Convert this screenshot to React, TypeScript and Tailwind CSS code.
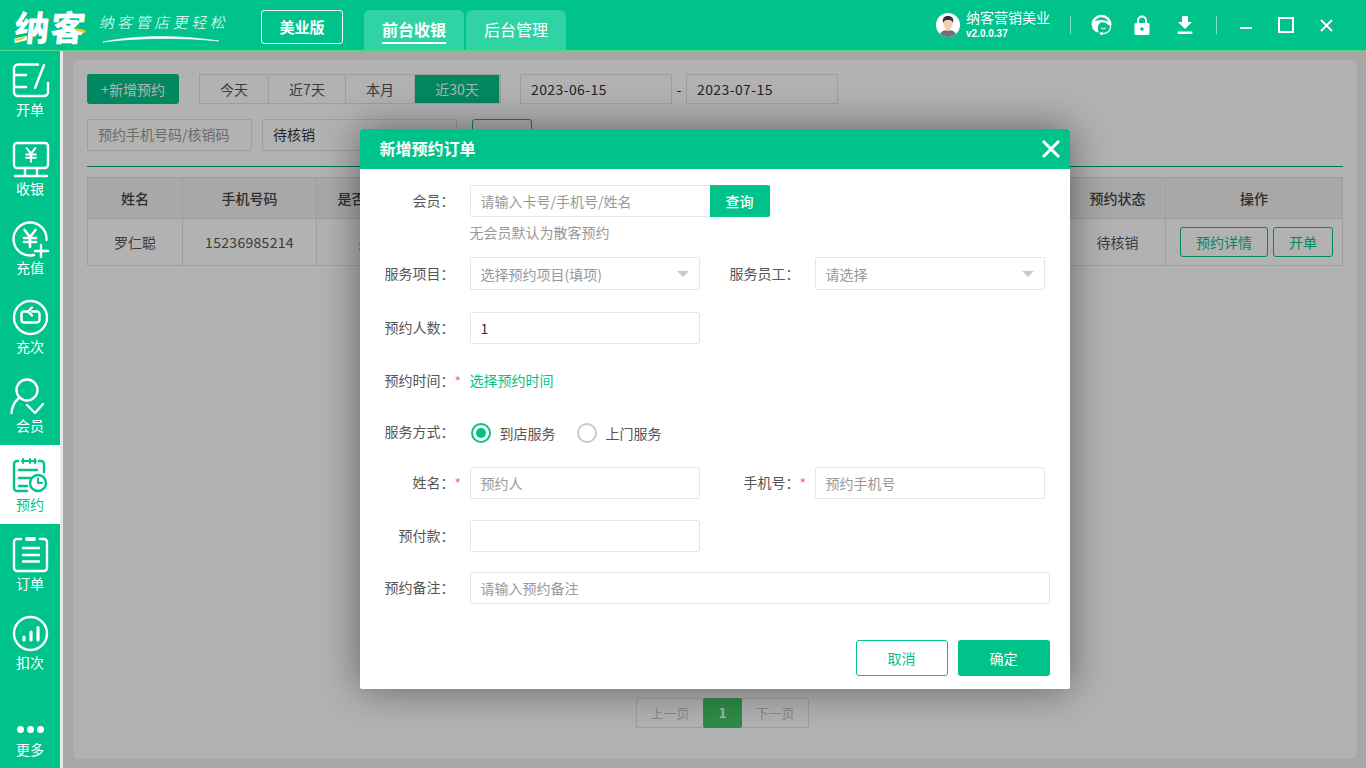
import React from "react";

const I = { fill: "none", stroke: "currentColor", strokeWidth: 2.4, strokeLinecap: "round" as const, strokeLinejoin: "round" as const };

const Yen = ({ x, y, s = 1 }: { x: number; y: number; s?: number }) => (
  <path
    transform={`translate(${x} ${y}) scale(${s})`}
    d="M-5.5 -8 L0 -1 L5.5 -8 M-6 0 H6 M-6 4 H6 M0 -1 V9"
    fill="none"
    stroke="currentColor"
    strokeWidth="2.6"
  />
);

const navItems = [
  {
    label: "开单",
    h: "h-[78px]",
    icon: (
      <svg width="40" height="38" viewBox="0 0 40 38" {...I}>
        <path d="M28 2.5 H8 a4 4 0 0 0 -4 4 V30 a4 4 0 0 0 4 4 H34 a4 4 0 0 0 4 -4 V21" />
        <path d="M5 13 H16 M5 25 H16 M34 3 L25 26" />
      </svg>
    ),
  },
  {
    label: "收银",
    icon: (
      <svg width="40" height="38" viewBox="0 0 40 38" {...I}>
        <rect x="4" y="3" width="34" height="25" rx="3" />
        <path d="M15 28 V35 M27 28 V35 M5 36 H37" />
        <Yen x={21} y={14.5} s={0.8} />
      </svg>
    ),
  },
  {
    label: "充值",
    icon: (
      <svg width="40" height="40" viewBox="0 0 40 40" {...I}>
        <path d="M24 37 A16.5 16.5 0 1 1 36.5 22" />
        <Yen x={20} y={20} />
        <path d="M25 33 H38 M31 27 V39" />
      </svg>
    ),
  },
  {
    label: "充次",
    icon: (
      <svg width="40" height="40" viewBox="0 0 40 40" {...I}>
        <g transform="translate(1 1)">
          <circle cx="19.5" cy="19.5" r="16.5" />
          <path d="M17 13.5 H13 a2.5 2.5 0 0 0 -2.5 2.5 V22 a2.5 2.5 0 0 0 2.5 2.5 H26 a2.5 2.5 0 0 0 2.5 -2.5 V16 a2.5 2.5 0 0 0 -2.5 -2.5 H21" />
          <path d="M21 9.5 L17 13.5 L21 17.5" />
        </g>
      </svg>
    ),
  },
  {
    label: "会员",
    icon: (
      <svg width="40" height="40" viewBox="0 0 40 40" {...I}>
        <circle cx="17" cy="14" r="10.5" />
        <path d="M1.5 37 C2 30 4 26 9 22" />
        <path d="M17 29 L25 37 L33 28" />
      </svg>
    ),
  },
  {
    label: "预约",
    active: true,
    icon: (
      <svg width="40" height="40" viewBox="0 0 40 40" {...I}>
        <path d="M8 6 H7 a3 3 0 0 0 -3 3 V33 a3 3 0 0 0 3 3 H17 M29 6 H31 a3 3 0 0 1 3 3 V17" />
        <path d="M13 4 V8 M20 4 V8 M25 4 V8 M12 6 H26" strokeWidth="2" />
        <path d="M9 15 H27 M9 23 H20 M9 31 H17" />
        <circle cx="28" cy="28" r="8" />
        <path d="M28 23.5 V28 H32" strokeWidth="2" />
      </svg>
    ),
  },
  {
    label: "订单",
    icon: (
      <svg width="40" height="38" viewBox="0 0 40 38" {...I}>
        <path d="M11 4 H7 a3 3 0 0 0 -3 3 V33 a3 3 0 0 0 3 3 H34 a3 3 0 0 0 3 -3 V7 a3 3 0 0 0 -3 -3 H30" />
        <rect x="15" y="2" width="11" height="4" rx="2" fill="currentColor" strokeWidth="0" />
        <path d="M12 13 H30 M12 20 H30 M12 26.5 H30" strokeLinecap="butt" />
      </svg>
    ),
  },
  {
    label: "扣次",
    icon: (
      <svg width="40" height="40" viewBox="0 0 40 40" {...I}>
        <circle cx="20.5" cy="20.5" r="16.5" />
        <path d="M14 24 V27 M21 19 V27 M28 14.5 V27" strokeWidth="3.2" />
      </svg>
    ),
  },
];

const tabs = [
  { label: "今天", w: "w-[69px]" },
  { label: "近7天", w: "w-[77px]" },
  { label: "本月", w: "w-[69px]" },
  { label: "近30天", w: "w-[85px]", on: true },
];

// the middle columns sit under the dialog in the picture
const columns = ["姓名", "手机号码", "是否会员", "", "", "", "", "", "预约状态", "操作"];
const colWidths = ["w-[95px]", "w-[134px]", "w-[98px]", "w-[130px]", "w-[130px]", "w-[160px]", "w-[120px]", "w-[115px]", "w-[96px]", "w-[177px]"];
const rowData = ["罗仁聪", "15236985214", "是", "", "", "", "", "", "待核销"];

const Label = ({ text, width, star }: { text: string; width: string; star?: boolean }) => (
  <div className={`flex shrink-0 items-center ${width}`}>
    <span className="mr-[-8px] flex-1 -translate-y-px text-right text-sm text-[#555]">{text}</span>
    <span className="w-[23px] pl-[8px] text-sm text-[#f56c6c]">{star ? "*" : ""}</span>
  </div>
);

const inputCls =
  "h-[32px] w-[230px] rounded-[2px] border border-[#e6e6e6] bg-white px-[10px] text-sm text-[#333] outline-none placeholder:text-[#999]";

const Select = ({ text }: { text: string }) => (
  <div className="flex h-[33px] w-[230px] items-center justify-between rounded-[2px] border border-[#e6e6e6] bg-white pl-[10px] pr-[10px] text-sm text-[#999]">
    <span>{text}</span>
    <span className="h-0 w-0 border-x-[6px] border-t-[6px] border-x-transparent border-t-[#c9c9c9]" />
  </div>
);

const Radio = ({ text, on }: { text: string; on?: boolean }) => (
  <div className="flex items-center text-sm text-[#555]">
    <span className={`mr-[9px] flex h-[20px] w-[20px] items-center justify-center rounded-full border-2 ${on ? "border-[#00c38b]" : "border-[#c9c9c9]"}`}>
      {on && <span className="h-[10px] w-[10px] rounded-full bg-[#00c38b]" />}
    </span>
    {text}
  </div>
);

export default function App() {
  return (
    <div className="flex h-[768px] w-[1366px] flex-col overflow-hidden bg-white font-['Noto_Sans_CJK_SC',sans-serif]">
      {/* top bar */}
      <header className="flex h-[51px] shrink-0 items-end border-b-[1px] border-[#4fd97a] bg-[#00c38b] text-white">
        <div className="relative ml-[15px] flex h-[50px] w-[72px] items-center">
          <span className="-skew-x-6 text-[35px] leading-none font-black tracking-[1px]">纳客</span>
          <svg className="absolute top-0 left-0" width="72" height="50" viewBox="0 0 72 50">
            <path d="M0 39 Q6 39 9 36 L10 38 Q6 41 1 41 Z" fill="#f5c518" />
            <path d="M60 29 Q66 28 71 31 L70 33 Q65 31 61 31 Z" fill="#f5c518" />
          </svg>
        </div>
        <div className="relative ml-[13px] flex h-[50px] w-[130px] flex-col">
          <span className="mt-[13px] -skew-x-12 text-[15px] leading-[18px] font-light tracking-[3.5px] whitespace-nowrap">纳客管店更轻松</span>
          <svg className="absolute top-[34px] left-[2px]" width="120" height="10" viewBox="0 0 120 10">
            <path d="M1 8 C30 2 70 0 117 7 C75 3 35 4 1 8 Z" fill="#fff" stroke="#fff" strokeWidth="0.6" />
          </svg>
        </div>
        <div className="mb-[6px] ml-[31px] flex h-[34px] w-[82px] items-center justify-center rounded-[3px] border border-white text-[15px] font-bold">
          美业版
        </div>
        <div className="ml-[21px] flex h-[40px] w-[100px] flex-col items-center rounded-t-[6px] bg-[#30d4a4] pt-[6px]">
          <span className="border-b-2 border-white text-base leading-[26px] font-bold">前台收银</span>
        </div>
        <div className="ml-[2px] flex h-[40px] w-[100px] flex-col items-center rounded-t-[6px] bg-[#30d4a4] pt-[6px]">
          <span className="text-base leading-[26px]">后台管理</span>
        </div>

        <div className="ml-auto flex h-[50px] items-center">
          <svg width="24" height="24" viewBox="0 0 24 24">
            <defs>
              <clipPath id="avatar">
                <circle cx="12" cy="12" r="12" />
              </clipPath>
            </defs>
            <g clipPath="url(#avatar)">
              <rect width="24" height="24" fill="#fff" />
              <path d="M3 24 C4 18 8 17 12 17 C16 17 20 18 21 24 Z" fill="#6f7480" />
              <rect x="10" y="14" width="4" height="4" fill="#f0c4a4" />
              <ellipse cx="12" cy="10.5" rx="4.6" ry="5.6" fill="#f6cfb2" />
              <path d="M7 10 C6 4 9 3 12 3 C16 3 18 5 17 10 C16 7.5 15 7 12 7 C9.5 7 8 7.5 7 10 Z" fill="#33323a" />
            </g>
          </svg>
          <div className="ml-[6px] flex w-[104px] flex-col">
            <span className="text-sm leading-[18px]">纳客营销美业</span>
            <span className="font-['Liberation_Sans',sans-serif] text-[10px] leading-[16px] font-bold">v2.0.0.37</span>
          </div>
          <span className="h-[18px] w-px bg-white/50" />
          <svg className="ml-[20px]" width="21" height="22" viewBox="0 0 21 22" fill="none" stroke="#fff">
            <path d="M1.5 11 A9 9 0 0 1 19.5 11" strokeWidth="2.4" />
            <path d="M1 9 C0.5 15 3 18 8 18.5 C6 15 6.5 10 10 8.5 C13 7.5 16 9 18.5 12 L19 9 C15 5 5 5 1 9 Z" fill="#fff" strokeWidth="0" />
            <path d="M19.5 11 V13 C19.5 17 16 19.5 12 19.5" strokeWidth="1.2" />
            <circle cx="10.5" cy="19.5" r="1.6" fill="#fff" strokeWidth="0" />
            <path d="M10 14 Q12.5 15.5 15 14" strokeWidth="1" />
          </svg>
          <svg className="ml-[22px]" width="16" height="20" viewBox="0 0 16 20">
            <path d="M4 9 V5.5 a4 4 0 0 1 8 0 V9" fill="none" stroke="#fff" strokeWidth="2" />
            <rect x="0.5" y="8" width="15" height="12" rx="1.5" fill="#fff" />
            <circle cx="8" cy="14" r="1.8" fill="#00c38b" />
          </svg>
          <svg className="ml-[27px]" width="16" height="19" viewBox="0 0 16 19" fill="#fff">
            <path d="M5 0 H11 V6 H15 L8 13 L1 6 H5 Z" />
            <rect x="0.5" y="15.5" width="15" height="2.6" rx="1.3" />
          </svg>
          <span className="ml-[23px] h-[18px] w-px bg-white/50" />
          <span className="ml-[23px] h-[2px] w-[12px] translate-y-[3px] bg-white" />
          <span className="ml-[26px] h-[16px] w-[16px] border-2 border-white" />
          <svg className="mr-[33px] ml-[26px]" width="13" height="13" viewBox="0 0 13 13" stroke="#fff" strokeWidth="1.8">
            <path d="M1 1 L12 12 M12 1 L1 12" />
          </svg>
        </div>
      </header>

      <div className="flex min-h-0 flex-1">
        {/* side nav */}
        <aside className="flex w-[60px] shrink-0 flex-col bg-[#00c38b] text-white">
          {navItems.map((item) => (
            <div
              key={item.label}
              className={`flex ${item.h || "h-[79px]"} flex-col items-center pt-[10px] ${item.active ? "bg-white text-[#00c38b]" : ""}`}
            >
              <div className="flex h-[40px] items-center justify-center">{item.icon}</div>
              <span className={`text-sm leading-[20px] ${item.h ? "mt-[-2px]" : "mt-[-1px]"}`}>{item.label}</span>
            </div>
          ))}
          <div className="mt-auto flex flex-col items-center pb-[9px]">
            <div className="flex gap-[3px]">
              <span className="h-[7px] w-[7px] rounded-full bg-white" />
              <span className="h-[7px] w-[7px] rounded-full bg-white" />
              <span className="h-[7px] w-[7px] rounded-full bg-white" />
            </div>
            <span className="mt-[6px] text-sm leading-[20px]">更多</span>
          </div>
        </aside>
        <div className="w-[3px] shrink-0 bg-[#e8e8e8]" />

        {/* main */}
        <main className="relative flex min-w-0 flex-1 bg-[#f0f0f0] py-[9px] pr-[10px] pl-[10px]">
          <div className="flex flex-1 flex-col rounded-[6px] bg-white px-[14px] pt-[14px]">
            <div className="flex h-[30px] items-stretch text-sm">
              <button className="w-[92px] rounded-[3px] bg-[#00c38b] text-white">+新增预约</button>
              <div className="ml-[20px] flex border border-[#e3e3e3]">
                {tabs.map((t) => (
                  <div
                    key={t.label}
                    className={`flex items-center justify-center border-r border-[#e3e3e3] ${t.w} ${t.on ? "bg-[#00c38b] text-white" : "text-[#555]"}`}
                  >
                    {t.label}
                  </div>
                ))}
              </div>
              <div className="ml-[19px] flex w-[152px] items-center border border-[#e3e3e3] px-[10px] tracking-[0.4px] text-[#333]">2023-06-15</div>
              <span className="flex w-[14px] items-center justify-center text-[#333]">-</span>
              <div className="flex w-[152px] items-center border border-[#e3e3e3] px-[10px] tracking-[0.4px] text-[#333]">2023-07-15</div>
            </div>

            <div className="mt-[15px] flex h-[32px] items-stretch text-sm">
              <div className="flex w-[165px] items-center rounded-[2px] border border-[#e3e3e3] px-[10px] pb-[2px] text-[#999]">预约手机号码/核销码</div>
              <div className="ml-[10px] flex w-[195px] items-center rounded-[2px] border border-[#e3e3e3] px-[10px] pb-[2px] text-[#333]">待核销</div>
              <div className="ml-[15px] w-[60px] rounded-[3px] border border-[#00c38b]" />
            </div>

            <div className="mt-[15px] h-px bg-[#00a878]" />

            <table className="mt-[10px] w-full table-fixed border-collapse border border-[#e5e5e5] text-center text-sm">
              <thead>
                <tr className="h-[41px] bg-[#f1f1f1] text-[#444]">
                  {columns.map((c, i) => (
                    <th key={i} className={`border border-[#e5e5e5] font-medium ${colWidths[i]}`}>
                      {c}
                    </th>
                  ))}
                </tr>
              </thead>
              <tbody>
                <tr className="h-[47px] text-[#555]">
                  {rowData.map((v, i) => (
                    <td key={i} className={`border border-[#e5e5e5] ${i === 1 ? "tracking-[0.3px]" : ""}`}>
                      {v}
                    </td>
                  ))}
                  <td className="border border-[#e5e5e5]">
                    <div className="flex justify-end gap-[5px] pr-[9px]">
                      <button className="h-[30px] w-[88px] rounded-[3px] border border-[#00c38b] text-[#00c38b]">预约详情</button>
                      <button className="h-[30px] w-[60px] rounded-[3px] border border-[#00c38b] text-[#00c38b]">开单</button>
                    </div>
                  </td>
                </tr>
              </tbody>
            </table>

            <div className="mt-auto mb-[31px] ml-[15px] flex h-[30px] justify-center text-[13px] text-[#c4c4c4]">
              <div className="flex w-[67px] items-center justify-center rounded-l-[2px] border border-r-0 border-[#e3e3e3]">上一页</div>
              <div className="flex w-[39px] items-center justify-center rounded-[2px] bg-[#42c766] font-bold text-white">1</div>
              <div className="flex w-[67px] items-center justify-center rounded-r-[2px] border border-l-0 border-[#e3e3e3]">下一页</div>
            </div>
          </div>

          {/* dialog over dimmed page */}
          <div className="absolute inset-0 flex justify-center bg-black/30 pt-[78px]">
            <div className="h-[560px] w-[710px] rounded-[2px] bg-white shadow-[0_0_40px_rgba(0,0,0,0.45)]">
              <div className="flex h-[40px] items-center justify-between rounded-t-[2px] bg-[#00c38b] pr-[9px] pl-[20px] text-white">
                <span className="-translate-y-px text-base font-bold">新增预约订单</span>
                <svg width="20" height="20" viewBox="0 0 20 20" stroke="#fff" strokeWidth="3">
                  <path d="M2 2 L18 18 M18 2 L2 18" />
                </svg>
              </div>

              <div className="flex flex-col pt-[16px]">
                <div className="flex h-[32px]">
                  <Label text="会员：" width="w-[110px]" />
                  <input className="h-[32px] w-[240px] rounded-l-[2px] border border-r-0 border-[#e6e6e6] px-[10px] text-sm outline-none placeholder:text-[#999]" placeholder="请输入卡号/手机号/姓名" />
                  <button className="h-[32px] w-[60px] rounded-r-[2px] bg-[#00c38b] text-sm font-medium text-white">查询</button>
                </div>
                <div className="mt-[5px] ml-[110px] text-sm leading-[20px] text-[#999]">无会员默认为散客预约</div>

                <div className="mt-[15px] flex h-[33px]">
                  <Label text="服务项目：" width="w-[110px]" />
                  <Select text="选择预约项目(填项)" />
                  <Label text="服务员工：" width="w-[115px]" />
                  <Select text="请选择" />
                </div>

                <div className="mt-[22px] flex h-[32px]">
                  <Label text="预约人数：" width="w-[110px]" />
                  <input className={inputCls} defaultValue="1" />
                </div>

                <div className="mt-[27px] flex h-[20px]">
                  <Label text="预约时间：" width="w-[110px]" star />
                  <span className="-translate-y-px text-sm leading-[20px] text-[#00c38b]">选择预约时间</span>
                </div>

                <div className="mt-[31px] flex h-[20px]">
                  <Label text="服务方式：" width="w-[110px]" />
                  <div className="flex translate-y-[1px] gap-[21px] pl-[1px]">
                    <Radio text="到店服务" on />
                    <Radio text="上门服务" />
                  </div>
                </div>

                <div className="mt-[25px] flex h-[32px]">
                  <Label text="姓名：" width="w-[110px]" star />
                  <input className={inputCls} placeholder="预约人" />
                  <Label text="手机号：" width="w-[115px]" star />
                  <input className={inputCls} placeholder="预约手机号" />
                </div>

                <div className="mt-[21px] flex h-[32px]">
                  <Label text="预付款：" width="w-[110px]" />
                  <input className={inputCls} />
                </div>

                <div className="mt-[20px] flex h-[32px]">
                  <Label text="预约备注：" width="w-[110px]" />
                  <input className="h-[32px] w-[580px] rounded-[2px] border border-[#e6e6e6] px-[10px] text-sm outline-none placeholder:text-[#999]" placeholder="请输入预约备注" />
                </div>

                <div className="mt-[36px] flex justify-end gap-[10px] pr-[20px]">
                  <button className="h-[36px] w-[92px] rounded-[3px] border border-[#00c38b] text-sm text-[#00c38b]">取消</button>
                  <button className="h-[36px] w-[92px] rounded-[3px] bg-[#00c38b] text-sm text-white">确定</button>
                </div>
              </div>
            </div>
          </div>
        </main>
      </div>
    </div>
  );
}
